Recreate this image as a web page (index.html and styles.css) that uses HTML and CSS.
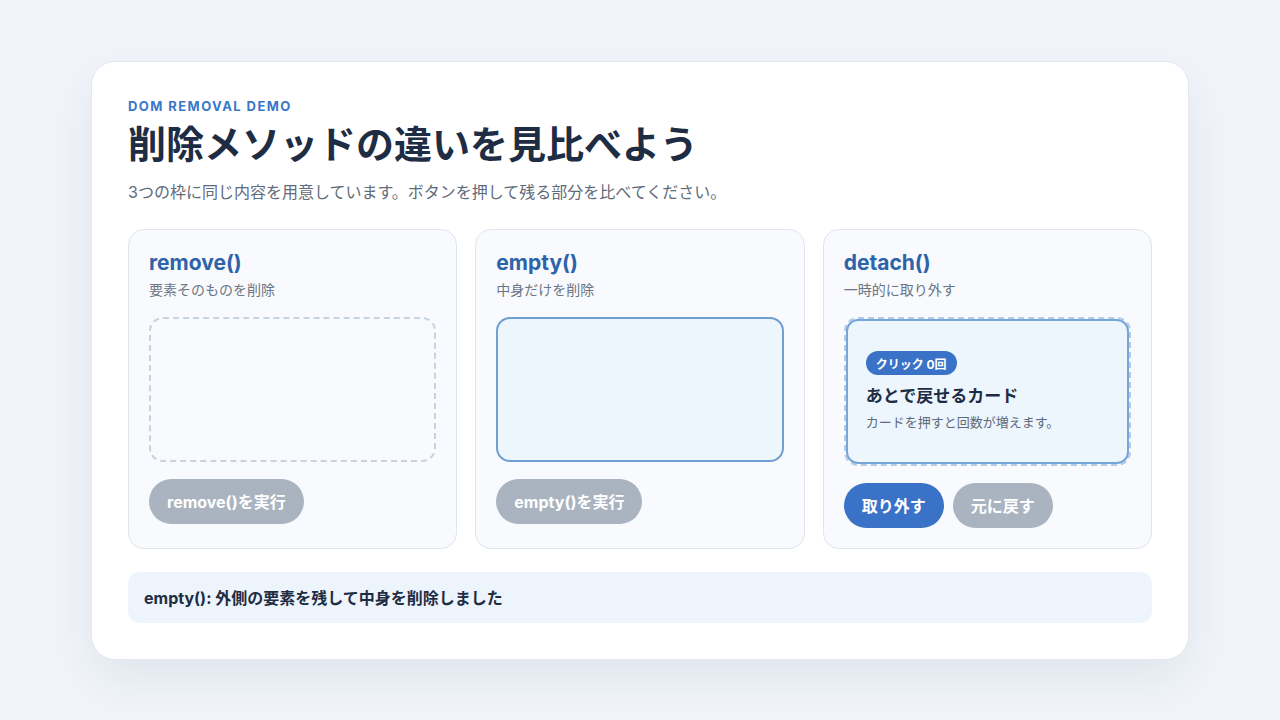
FILE: index.html
```html
<!DOCTYPE html>
<html lang="ja">
<head>
  <meta charset="UTF-8">
  <meta name="viewport" content="width=device-width, initial-scale=1.0">
  <title>DOM removal demo</title>
  <link rel="stylesheet" href="styles.css">
</head>
<body>
  <main class="panel">
    <p class="eyebrow">DOM REMOVAL DEMO</p>
    <h1>削除メソッドの違いを見比べよう</h1>
    <p class="lead">3つの枠に同じ内容を用意しています。ボタンを押して残る部分を比べてください。</p>

    <div class="methods">
      <section class="method">
        <h2>remove()</h2>
        <p class="method-desc">要素そのものを削除</p>
        <div class="slot slot-removed"></div>
        <div class="actions">
          <button class="btn btn-muted">remove()を実行</button>
        </div>
      </section>

      <section class="method">
        <h2>empty()</h2>
        <p class="method-desc">中身だけを削除</p>
        <div class="slot slot-emptied"></div>
        <div class="actions">
          <button class="btn btn-muted">empty()を実行</button>
        </div>
      </section>

      <section class="method">
        <h2>detach()</h2>
        <p class="method-desc">一時的に取り外す</p>
        <div class="slot slot-detach">
          <div class="demo-card">
            <span class="badge">クリック 0回</span>
            <h3>あとで戻せるカード</h3>
            <p>カードを押すと回数が増えます。</p>
          </div>
        </div>
        <div class="actions">
          <button class="btn btn-primary">取り外す</button>
          <button class="btn btn-muted">元に戻す</button>
        </div>
      </section>
    </div>

    <div class="status">empty(): 外側の要素を残して中身を削除しました</div>
  </main>
</body>
</html>
```

FILE: styles.css
```css
* {
  margin: 0;
  padding: 0;
  box-sizing: border-box;
}

body {
  min-height: 100vh;
  display: flex;
  align-items: center;
  justify-content: center;
  background-color: #f1f5fa;
  color: #1e2d44;
  font-family: 'Inter', 'Noto Sans CJK JP', sans-serif;
}

.panel {
  width: 1098px;
  padding: 36px;
  background-color: #fff;
  border: 1px solid #e3e8ef;
  border-radius: 24px;
  box-shadow: 0 20px 50px rgba(30, 50, 90, 0.08);
}

.eyebrow {
  font-size: 13px;
  line-height: 16px;
  font-weight: 700;
  letter-spacing: 0.11em;
  color: #3a77c8;
}

h1 {
  margin-top: 7px;
  font-size: 38px;
  line-height: 46px;
  font-weight: 700;
  color: #1e2d44;
}

.lead {
  margin-top: 14px;
  font-size: 16px;
  line-height: 22px;
  color: #5f6b7a;
}

.methods {
  margin-top: 26px;
  display: grid;
  grid-template-columns: repeat(3, 1fr);
  gap: 18px;
}

.method {
  padding: 20px;
  background-color: #f8fafd;
  border: 1px solid #dfe5ec;
  border-radius: 16px;
}

.method h2 {
  font-size: 21px;
  line-height: 26px;
  font-weight: 700;
  color: #2d63a8;
}

.method-desc {
  margin-top: 4px;
  font-size: 14px;
  line-height: 20px;
  color: #6b7583;
}

.slot {
  margin-top: 17px;
  min-height: 145px;
  border: 2px dashed #c7d3de;
  border-radius: 14px;
}

.slot-emptied {
  border: 2px solid #6f9fd4;
  background-color: #edf5fd;
}

.slot-detach {
  border-color: #b5cbe6;
}

.demo-card {
  min-height: 145px;
  padding: 18px;
  display: flex;
  flex-direction: column;
  justify-content: center;
  align-items: flex-start;
  background-color: #edf5fd;
  border: 2px solid #76a5d8;
  border-radius: 12px;
}

.badge {
  padding: 0 10px;
  height: 24px;
  display: inline-flex;
  align-items: center;
  font-size: 12px;
  font-weight: 700;
  color: #fff;
  background-color: #3a72c8;
  border-radius: 999px;
}

.demo-card h3 {
  margin-top: 9px;
  font-size: 17px;
  line-height: 24px;
  font-weight: 700;
  color: #1e2d44;
}

.demo-card p {
  margin-top: 5px;
  font-size: 13px;
  line-height: 18px;
  color: #5f6b7a;
}

.actions {
  margin-top: 17px;
  display: flex;
  gap: 9px;
}

.btn {
  height: 45px;
  padding: 0 18px;
  border: none;
  border-radius: 999px;
  font-family: inherit;
  font-size: 16px;
  font-weight: 700;
  color: #fff;
  cursor: pointer;
}

.btn-muted {
  background-color: #aab4c0;
}

.btn-primary {
  background-color: #3a72c8;
}

.status {
  margin-top: 23px;
  padding: 0 16px;
  height: 51px;
  display: flex;
  align-items: center;
  font-size: 16px;
  font-weight: 700;
  color: #1e2d44;
  background-color: #eef4fb;
  border-radius: 12px;
}
```
